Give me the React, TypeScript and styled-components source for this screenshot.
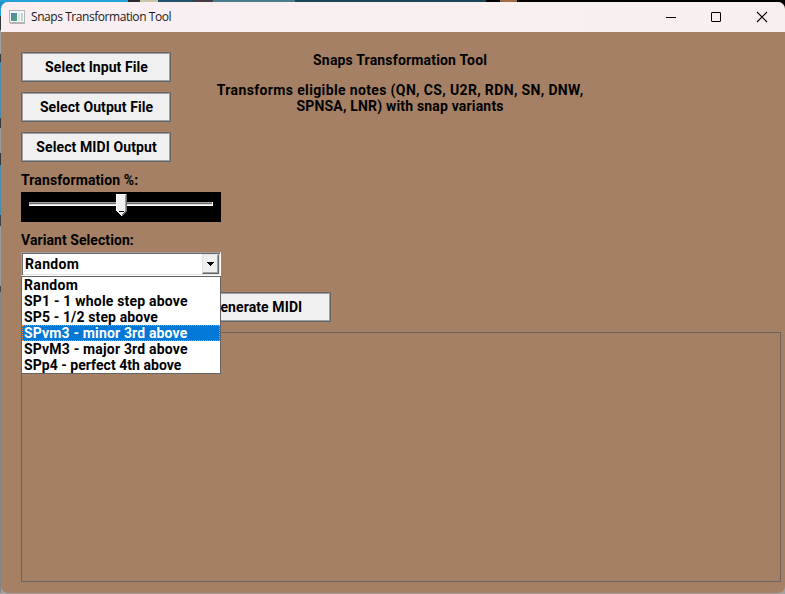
import React from "react";
import styled, { createGlobalStyle } from "styled-components";

const GlobalStyle = createGlobalStyle`
  * { box-sizing: border-box; }
  html, body, #root { height: 100%; margin: 0; overflow: hidden; }
  body { background: #8a8a8c; }
`;

const Desktop = styled.div`
  height: 594px;
  width: 785px;
  padding: 2px 0 1px 1px;
  overflow: hidden;
  background:
    linear-gradient(90deg, #23a0d8 0 128px, #2a2a2c 128px 140px, #c9c6a8 140px 158px, #24506a 158px 193px, #443c40 193px 213px, #4a7c90 213px 295px, #1c455c 295px 486px, #000 486px 500px, #a06c48 500px 517px, #000 517px) 0 0 / 785px 2px no-repeat,
    linear-gradient(90deg, #2090c4 0 5px, transparent 5px) 0 0 / 5px 8px no-repeat,
    linear-gradient(#000, #000) 100% 0 / 8px 10px no-repeat,
    linear-gradient(180deg, #23a0d8 0 16px, #33363a 16px 30px, #a0a0a2 30px 54px, #34383c 54px 62px, #4a8cac 62px 118px, #33363a 118px 128px, #9a9a9c 128px 153px, #33363a 153px 165px, #4a8cac 165px 215px, #3c4248 215px 226px, #9a9a9c 226px 286px, #44484c 286px 292px, #858587 292px) 0 0 / 1px 593px no-repeat,
    #a3a3a5;
`;

const Window = styled.main`
  display: flex;
  flex-direction: column;
  height: 591px;
  border-radius: 7px;
  overflow: hidden;
  background: #a58064;
`;

const TitleBar = styled.header`
  display: flex;
  align-items: center;
  height: 30px;
  flex: none;
  padding-left: 8px;
  background: linear-gradient(90deg, #f9eff3, #f8f0ee);
  color: #191919;
  font: 12px "Open Sans", "Noto Sans", sans-serif;
`;

const Caption = styled.span<{ $spacing: number }>`
  flex: 1;
  margin-left: 6px;
  line-height: 16px;
  letter-spacing: ${(p) => p.$spacing}px;
`;

const CaptionButton = styled.button`
  display: grid;
  place-items: center;
  width: 45px;
  height: 30px;
  padding: 0;
  border: 0;
  background: none;
  &:last-child { width: 47px; padding-left: 1px; }
`;

const Client = styled.section`
  display: flex;
  flex-direction: column;
  flex: 1;
  padding: 20px 4px 11px 20px;
  color: #000;
  font: 700 14px/16px Roboto, "Liberation Sans", sans-serif;
`;

const TopRow = styled.div`
  display: flex;
  height: 120px;
`;

const ButtonStack = styled.div`
  display: flex;
  flex-direction: column;
  gap: 10px;
`;

const PushButton = styled.button`
  width: 150px;
  height: 30px;
  padding: 0 0 0 1px;
  border: 1px solid #646464;
  box-shadow: inset 0 0 0 1px #a0a0a0;
  background: #f0f0f0;
  color: #000;
  font: inherit;
  white-space: nowrap;
`;

const Heading = styled.div`
  display: flex;
  flex-direction: column;
  align-items: center;
  width: 400px;
  margin-left: 29px;
  white-space: nowrap;
`;

const Title = styled.div`
  margin-bottom: 14px;
`;

const Label = styled.span<{ $spacing: number }>`
  display: inline-block;
  height: 16px;
  line-height: 16px;
  white-space: pre;
  letter-spacing: ${(p) => p.$spacing}px;
  margin-right: ${(p) => -p.$spacing}px;
`;

const FieldLabel = styled.div`
  height: 20px;
`;

const Trackbar = styled.div`
  width: 200px;
  height: 30px;
  margin-bottom: 10px;
  background: #000;
  svg { display: block; }
`;

const Combo = styled.div`
  position: relative;
  width: 200px;
  height: 24px;
  flex: none;
`;

const ComboField = styled.div`
  display: flex;
  align-items: center;
  justify-content: space-between;
  width: 200px;
  height: 24px;
  padding: 0 1px 1px 3px;
  border: 1px solid;
  border-color: #a0a0a0 #fff #fff #a0a0a0;
  box-shadow: inset 1px 1px #696969, inset -1px -1px #e3e3e3;
  background: #fff;
`;

const DropButton = styled.button`
  display: grid;
  place-items: center;
  width: 17px;
  height: 20px;
  padding: 0;
  border: 1px solid;
  border-color: #e3e3e3 #696969 #696969 #e3e3e3;
  box-shadow: inset -1px -1px #a0a0a0;
  background: #f0f0f0;
`;

const OptionList = styled.ul`
  position: absolute;
  z-index: 2;
  top: 24px;
  left: 0;
  width: 200px;
  height: 98px;
  margin: 0;
  padding: 0;
  border: 1px solid #646464;
  background: #fff;
  list-style: none;
`;

const Option = styled.li<{ $active: boolean }>`
  height: 16px;
  padding-left: 2px;
  line-height: 16px;
  background: ${(p) => (p.$active ? "#0078d7" : "#fff")};
  color: ${(p) => (p.$active ? "#fff" : "#000")};
  outline: ${(p) => (p.$active ? "1px dotted #ff8728" : "none")};
  outline-offset: -1px;
`;

const ActionRow = styled.div`
  height: 30px;
  margin: 16px 0 10px;
  padding-left: 160px;
`;

const LogBox = styled.div`
  flex: 1;
  border: 1px solid #6b6460;
`;

const files: [string, number][] = [
  ["Select Input File", 0.08],
  ["Select Output File", 0.08],
  ["Select MIDI Output", 0.1],
];

const variants: [string, number][] = [
  ["Random", 0.35],
  ["SP1 - 1 whole step above", 0.2],
  ["SP5 - 1/2 step above", 0.13],
  ["SPvm3 - minor 3rd above", 0.16],
  ["SPvM3 - major 3rd above", 0.18],
  ["SPp4 - perfect 4th above", 0.04],
];

const AppIcon = () => (
  <svg width="16" height="14" viewBox="0 0 16 14" shapeRendering="crispEdges">
    <defs>
      <linearGradient id="pane" x1="0" y1="0" x2="1" y2="1">
        <stop offset="0" stopColor="#4f7fb8" />
        <stop offset="1" stopColor="#58a86c" />
      </linearGradient>
    </defs>
    <rect x=".5" y=".5" width="15" height="12" fill="#f5f7f8" stroke="#b3b6b9" />
    <path d="M1 13.5h15" stroke="#b5b2b4" />
    <rect x="2" y="3" width="6" height="8" fill="url(#pane)" />
    <rect x="9" y="3" width="2" height="8" fill="#dce3ea" />
    <rect x="12" y="3" width="2" height="8" fill="#bfd6d0" />
  </svg>
);

export default function App() {
  return (
    <Desktop>
      <GlobalStyle />
      <Window>
        <TitleBar>
          <AppIcon />
          <Caption $spacing={-0.44}>Snaps Transformation Tool</Caption>
          <CaptionButton aria-label="Minimize">
            <svg width="12" height="12"><path d="M1 6.5h10" stroke="#000" /></svg>
          </CaptionButton>
          <CaptionButton aria-label="Maximize">
            <svg width="12" height="12"><rect x="1.5" y="1.5" width="9" height="9" rx=".5" fill="none" stroke="#000" /></svg>
          </CaptionButton>
          <CaptionButton aria-label="Close">
            <svg width="12" height="12"><path d="M1 1l10 10M11 1L1 11" stroke="#000" strokeWidth="1.1" /></svg>
          </CaptionButton>
        </TitleBar>
        <Client>
          <TopRow>
            <ButtonStack>
              {files.map(([text, spacing]) => (
                <PushButton key={text}><Label $spacing={spacing}>{text}</Label></PushButton>
              ))}
            </ButtonStack>
            <Heading>
              <Title><Label $spacing={0.17}>Snaps Transformation Tool</Label></Title>
              <Label $spacing={0.36}>Transforms eligible notes (QN, CS, U2R, RDN, SN, DNW,</Label>
              <Label $spacing={0.18}>SPNSA, LNR) with snap variants</Label>
            </Heading>
          </TopRow>
          <FieldLabel><Label $spacing={0.12}>Transformation %:</Label></FieldLabel>
          <Trackbar>
            <svg width="200" height="30" shapeRendering="crispEdges">
              <rect x="8" y="10" width="184" height="4" fill="#fff" />
              <rect x="8" y="10" width="183" height="1" fill="#a0a0a0" />
              <rect x="8" y="11" width="183" height="1" fill="#696969" />
              <rect x="8" y="10" width="1" height="3" fill="#a0a0a0" />
              <rect x="9" y="12" width="182" height="1" fill="#e3e3e3" />
              <path d="M95 2h11v17l-5 5h-1l-5-5z" fill="#f0f0f0" />
              <path d="M95.500 19V2.500H105" fill="none" stroke="#fff" />
              <path d="M105.500 2v17" stroke="#696969" />
              <path d="M104.500 3v16" stroke="#a0a0a0" />
              <path d="M98 19.500h5" stroke="#000" />
              <path d="M101 23.500l5-5" stroke="#696969" />
            </svg>
          </Trackbar>
          <FieldLabel><Label $spacing={0.07}>Variant Selection:</Label></FieldLabel>
          <Combo>
            <ComboField>
              <Label $spacing={0.35}>Random</Label>
              <DropButton aria-label="Open">
                <svg width="7" height="4" shapeRendering="crispEdges"><path d="M0 0h7v1H0zM1 1h5v1H1zM2 2h3v1H2zM3 3h1v1H3z" /></svg>
              </DropButton>
            </ComboField>
            <OptionList>
              {variants.map(([text, spacing], i) => (
                <Option key={text} $active={i === 3}><Label $spacing={spacing}>{text}</Label></Option>
              ))}
            </OptionList>
          </Combo>
          <ActionRow>
            <PushButton><Label $spacing={0.1}>Generate MIDI</Label></PushButton>
          </ActionRow>
          <LogBox />
        </Client>
      </Window>
    </Desktop>
  );
}
